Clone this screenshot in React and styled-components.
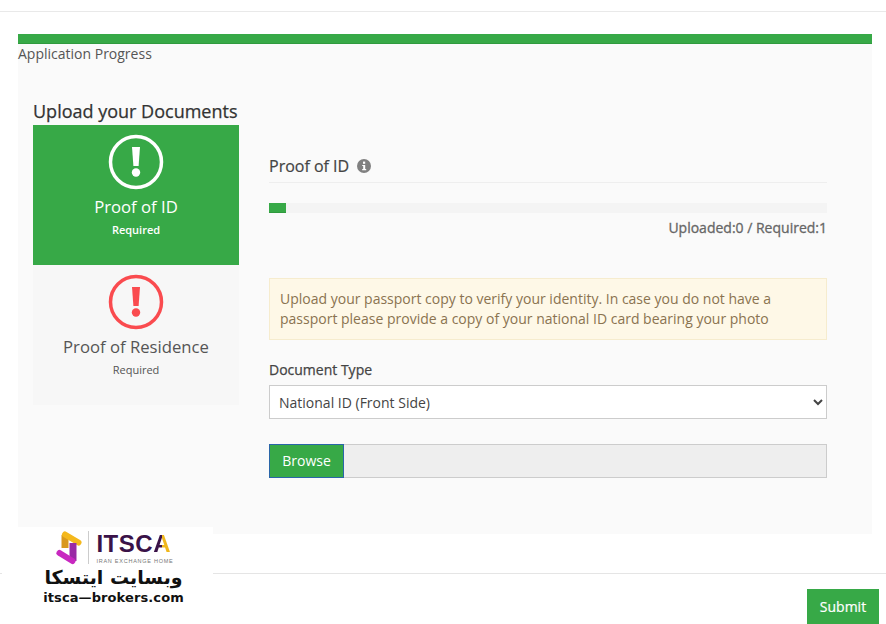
import React from 'react'
import styled, { createGlobalStyle } from 'styled-components'

const GREEN = '#37a947'

const Global = createGlobalStyle`
  html, body {
    margin: 0;
    padding: 0;
    background: #fff;
    overflow: hidden;
  }
  * { box-sizing: border-box; }
  body {
    font-family: "Open Sans", "Noto Sans", sans-serif;
    color: #444;
  }
`

const Page = styled.div`
  position: relative;
  width: 886px;
  height: 624px;
  overflow: hidden;
`
const TopBar = styled.div`
  height: 12px;
  border-bottom: 1px solid #e9e9e9;
`
const Main = styled.main`
  margin: 22px 14px 0 18px;
  height: 500px;
  display: flex;
  flex-direction: column;
  background: #fafafa;
`
const ProgressBar = styled.div`
  height: 10px;
  flex: none;
  background: ${GREEN};
  border-bottom: 1px solid #2f9a3e;
`
const ProgressLabel = styled.div`
  font-size: 14px;
  line-height: 20px;
  color: #555;
`
const Content = styled.div`
  padding: 36px 45px 0 15px;
`
const Heading = styled.h2`
  margin: 0;
  font-size: 18px;
  line-height: 23px;
  height: 25px;
  font-weight: 500;
  color: #333;
  -webkit-text-stroke: 0.25px #333;
`
const Columns = styled.div`
  display: flex;
  gap: 30px;
`
const TabList = styled.div`
  width: 206px;
  flex: none;
  display: flex;
  flex-direction: column;
`
const Tab = styled.div`
  height: 140px;
  padding-top: 9px;
  display: flex;
  flex-direction: column;
  align-items: center;
  background: ${p => (p.$active ? GREEN : '#f7f7f7')};
  color: ${p => (p.$active ? '#fff' : '#555')};
`
const TabTitle = styled.div`
  margin-top: 5px;
  font-size: 16.7px;
  line-height: 24px;
`
const TabSub = styled.div`
  margin-top: 2px;
  font-size: 11px;
  line-height: 18px;
  font-weight: ${p => (p.$active ? 600 : 400)};
`
const Panel = styled.section`
  flex: 1;
  padding-top: 29px;
`
const PanelHead = styled.div`
  height: 29px;
  display: flex;
  align-items: flex-start;
  gap: 8px;
  border-bottom: 1px solid #eee;
  font-size: 16px;
  line-height: 24px;
  font-weight: 500;
  color: #444;
  -webkit-text-stroke: 0.2px #444;
`
const InfoIcon = styled.svg`
  width: 14px;
  height: 14px;
  margin-top: 5px;
`
const Track = styled.div`
  height: 10px;
  margin-top: 20px;
  background: #f4f4f4;
`
const Fill = styled.div`
  height: 100%;
  background: ${GREEN};
  border-bottom: 1px solid #2f9a3e;
`
const Count = styled.div`
  margin-top: 5px;
  text-align: right;
  font-size: 14px;
  line-height: 20px;
  font-weight: 500;
  color: #666;
  -webkit-text-stroke: 0.3px #666;
`
const Notice = styled.div`
  margin-top: 40px;
  height: 62px;
  padding: 10px;
  background: #fef8e7;
  border: 1px solid #f6ecce;
  font-size: 14px;
  line-height: 20px;
  color: #8a7350;
`
const Label = styled.label`
  display: block;
  margin-top: 20px;
  font-size: 14px;
  line-height: 20px;
  font-weight: 500;
  color: #444;
  -webkit-text-stroke: 0.25px #444;
`
const Select = styled.select`
  display: block;
  width: 100%;
  height: 34px;
  margin-top: 5px;
  padding: 0 5px;
  font-family: inherit;
  font-size: 14px;
  color: #444;
  background: #fff;
  border: 1px solid #ccc;
  border-radius: 0;
`
const FileRow = styled.div`
  display: flex;
  height: 34px;
  margin-top: 25px;
  background: #eee;
  border: 1px solid #ccc;
`
const Browse = styled.button`
  width: 75px;
  margin: -1px 0 -1px -1px;
  padding: 0 0 2px;
  font-family: inherit;
  font-size: 14px;
  color: #fff;
  background: ${GREEN};
  border: 1px solid #2a66a8;
  border-radius: 0;
`
const Footer = styled.footer`
  position: absolute;
  left: 0;
  right: 0;
  top: 573px;
  height: 51px;
  padding: 15px 7px 0 0;
  display: flex;
  justify-content: flex-end;
  border-top: 1px solid #e5e5e5;
`
const Submit = styled.button`
  width: 72px;
  height: 35px;
  padding: 0;
  font-family: inherit;
  font-size: 14px;
  font-weight: 500;
  color: #fff;
  -webkit-text-stroke: 0.2px #fff;
  background: ${GREEN};
  border: 0;
  border-radius: 0;
`
const Watermark = styled.div`
  position: absolute;
  left: 2px;
  top: 527px;
  width: 211px;
  height: 78px;
  padding-left: 12px;
  background: #fff;
  display: flex;
  flex-direction: column;
  align-items: center;
  color: #111;
`
const LogoRow = styled.div`
  height: 34px;
  margin: 4px 0 0 3px;
  display: flex;
  align-items: flex-start;
`
const LogoDivider = styled.div`
  width: 1px;
  height: 33px;
  margin: 0 7px 0 6px;
  background: #ccc;
`
const LogoText = styled.div`
  display: flex;
  flex-direction: column;
  margin-top: 2px;
`
const LogoName = styled.div`
  font-family: "Liberation Sans", sans-serif;
  font-size: 24px;
  line-height: 22px;
  font-weight: 700;
  letter-spacing: 0.5px;
  color: #3a1248;
`
const LogoAccent = styled.span`
  background: linear-gradient(90deg, #3a1248 50%, #f0b71c 50%);
  -webkit-background-clip: text;
  background-clip: text;
  color: transparent;
`
const LogoTag = styled.div`
  margin-top: 3px;
  font-family: "Liberation Sans", sans-serif;
  font-size: 5.5px;
  line-height: 7px;
  letter-spacing: 0.75px;
  color: #777;
  white-space: nowrap;
`
const Farsi = styled.div`
  margin-top: 2px;
  font-family: "DejaVu Sans", sans-serif;
  font-size: 19px;
  line-height: 21px;
  font-weight: 700;
  direction: rtl;
`
const Site = styled.div`
  margin-top: 2px;
  font-family: "DejaVu Sans", sans-serif;
  font-size: 13px;
  line-height: 16px;
  font-weight: 700;
  letter-spacing: 0.1px;
`

function Alert({ color }) {
  return (
    <svg width="56" height="56" viewBox="0 0 56 56">
      <circle cx="28" cy="28" r="25.5" fill="none" stroke={color} strokeWidth="3.5" />
      <path d="M24 13h8l-1.4 19h-5.2z" fill={color} />
      <circle cx="28" cy="38.5" r="4.2" fill={color} />
    </svg>
  )
}

function LogoMark() {
  return (
    <svg width="26" height="34" viewBox="0 0 26 34">
      <path d="M9 17V4" fill="none" stroke="#d9991e" strokeWidth="7" />
      <path d="M9 3.5l13.5 8" fill="none" stroke="#f4b81c" strokeWidth="6" strokeLinecap="round" />
      <path d="M17 12v18" fill="none" stroke="#9a2aa5" strokeWidth="7" />
      <path d="M3.5 22l13 8" fill="none" stroke="#c828c0" strokeWidth="6" strokeLinecap="round" />
    </svg>
  )
}

function App() {
  return (
    <Page>
      <Global />
      <TopBar />
      <Main>
        <ProgressBar />
        <ProgressLabel>Application Progress</ProgressLabel>
        <Content>
          <Heading>Upload your Documents</Heading>
          <Columns>
            <TabList>
              <Tab $active>
                <Alert color="#fff" />
                <TabTitle>Proof of ID</TabTitle>
                <TabSub $active>Required</TabSub>
              </Tab>
              <Tab>
                <Alert color="#fa4b4f" />
                <TabTitle>Proof of Residence</TabTitle>
                <TabSub>Required</TabSub>
              </Tab>
            </TabList>
            <Panel>
              <PanelHead>
                Proof of ID
                <InfoIcon viewBox="0 0 14 14">
                  <circle cx="7" cy="7" r="7" fill="#808080" />
                  <rect x="6" y="2.6" width="2.2" height="2.2" fill="#fff" />
                  <path d="M5.2 5.9h3v4.2h1v1.2H5.2v-1.2h1V7.1h-1z" fill="#fff" />
                </InfoIcon>
              </PanelHead>
              <Track>
                <Fill style={{ width: `${(17 / 558) * 100}%` }} />
              </Track>
              <Count>Uploaded:0 / Required:1</Count>
              <Notice>
                Upload your passport copy to verify your identity. In case you do not have a passport please provide a copy of your national ID card bearing your photo
              </Notice>
              <Label htmlFor="doc-type">Document Type</Label>
              <Select id="doc-type" defaultValue="front">
                <option value="front">National ID (Front Side)</option>
              </Select>
              <FileRow>
                <Browse type="button">Browse</Browse>
              </FileRow>
            </Panel>
          </Columns>
        </Content>
      </Main>
      <Footer>
        <Submit type="button">Submit</Submit>
      </Footer>
      <Watermark>
        <LogoRow>
          <LogoMark />
          <LogoDivider />
          <LogoText>
            <LogoName>ITSC<LogoAccent>A</LogoAccent></LogoName>
            <LogoTag>IRAN EXCHANGE HOME</LogoTag>
          </LogoText>
        </LogoRow>
        <Farsi>وبسایت ایتسکا</Farsi>
        <Site>itsca—brokers.com</Site>
      </Watermark>
    </Page>
  )
}

export default App
